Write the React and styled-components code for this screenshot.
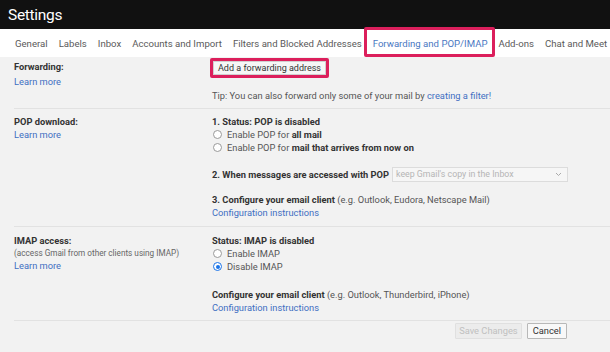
import React from "react";
import styled, { createGlobalStyle } from "styled-components";

const Global = createGlobalStyle`
  html, body { margin: 0; padding: 0; background: #f2f2f2; }
  body { font-family: Roboto, "Liberation Sans", sans-serif; width: 610px; height: 352px; overflow: hidden; }
  * { box-sizing: border-box; }
`;

const PINK = "#dc1f5c";
const LINK = "#3f6fc2";

const Page = styled.div`
  width: 610px;
  height: 352px;
  background: #f2f2f2;
  overflow: hidden;
`;

const Header = styled.header`
  height: 29px;
  background: #111111;
  display: flex;
  align-items: center;
  padding-left: 8px;
`;

const Title = styled.h1`
  margin: 0;
  color: #ffffff;
  font-family: Roboto, "Open Sans", sans-serif;
  font-weight: 400;
  font-size: 15.5px;
  letter-spacing: -0.3px;
`;

const Tabs = styled.nav`
  height: 28px;
  background: #ffffff;
  display: flex;
  align-items: center;
  gap: 11px;
  padding-left: 15px;
  white-space: nowrap;
`;

const Tab = styled.span`
  position: relative;
  font-size: 9.6px;
  color: ${(p) => (p.$active ? "#4a78c2" : "#5a5a5a")};
  &::after {
    content: "";
    display: ${(p) => (p.$active ? "block" : "none")};
    position: absolute;
    left: -9px;
    right: -8px;
    top: -11px;
    bottom: -8px;
    border: 3px solid ${PINK};
    border-radius: 2px;
  }
`;

const Section = styled.section`
  display: grid;
  grid-template-columns: 198px 1fr;
  padding: ${(p) => p.$pad || "3px 0 5px 0"};
  margin-left: 14px;
  border-bottom: 1px solid #e2e2e2;
  font-size: 9.3px;
  line-height: 13px;
  color: #555;
`;

const LabelCol = styled.div`
  display: flex;
  flex-direction: column;
`;

const Label = styled.div`
  font-weight: 700;
  color: #333;
`;

const Sub = styled.div`
  font-size: 8.2px;
  color: #666;
  line-height: 12px;
`;

const Link = styled.a`
  color: ${LINK};
  text-decoration: none;
  margin-top: ${(p) => p.$mt || "0"};
  display: ${(p) => (p.$inline ? "inline" : "block")};
`;

const ValueCol = styled.div`
  display: flex;
  flex-direction: column;
`;

const Line = styled.div`
  margin-top: ${(p) => p.$mt || "0"};
  white-space: nowrap;
`;

const Strong = styled.b`
  color: #333;
  font-weight: 700;
`;

const Highlight = styled.div`
  align-self: flex-start;
  margin: -2px 0 0 -2px;
  border: 3px solid ${PINK};
  border-radius: 2px;
`;

const ForwardButton = styled.button`
  font-family: inherit;
  font-size: 9px;
  color: #333;
  background: #f6f6f6;
  border: 1px solid #d0d0d0;
  height: 14px;
  padding: 0 4px;
  line-height: 12px;
  display: block;
`;

const Radio = styled.span`
  display: inline-block;
  width: 9px;
  height: 9px;
  border-radius: 50%;
  border: 1px solid ${(p) => (p.$checked ? "#1a73e8" : "#9a9a9a")};
  background: #fff;
  margin: 0 5px 0 1px;
  vertical-align: -1px;
  position: relative;
  &::after {
    content: "";
    display: ${(p) => (p.$checked ? "block" : "none")};
    position: absolute;
    left: 1.5px;
    top: 1.5px;
    width: 4px;
    height: 4px;
    border-radius: 50%;
    background: #1a73e8;
  }
`;

const SelectRow = styled.div`
  display: flex;
  align-items: center;
  gap: 3px;
  margin-top: 13px;
  height: 15px;
  white-space: nowrap;
`;

const Select = styled.div`
  width: 176px;
  height: 15px;
  border: 1px solid #dcdcdc;
  background: #f6f6f6;
  color: #b5b5b5;
  font-size: 8.8px;
  display: flex;
  align-items: center;
  justify-content: space-between;
  padding: 0 5px 0 3px;
`;

const Footer = styled.div`
  display: flex;
  justify-content: flex-end;
  gap: 5px;
  padding: 2px 43px 0 0;
`;

const Btn = styled.button`
  font-family: inherit;
  font-size: 9.3px;
  height: 16px;
  padding: 0 ${(p) => (p.$disabled ? "3px" : "5px")};
  background: ${(p) => (p.$disabled ? "#ececec" : "#f8f8f8")};
  color: ${(p) => (p.$disabled ? "#c0c0c0" : "#333")};
  border: 1px solid ${(p) => (p.$disabled ? "#e0e0e0" : "#b8b8b8")};
  border-radius: 1px;
  line-height: 14px;
`;

const Chevron = () => (
  <svg width="7" height="5" viewBox="0 0 7 5">
    <path d="M1 1 L3.5 3.5 L6 1" stroke="#aaa" strokeWidth="1" fill="none" />
  </svg>
);

const tabs = [
  "General",
  "Labels",
  "Inbox",
  "Accounts and Import",
  "Filters and Blocked Addresses",
  "Forwarding and POP/IMAP",
  "Add-ons",
  "Chat and Meet",
];

export default function App() {
  return (
    <Page>
      <Global />
      <Header>
        <Title>Settings</Title>
      </Header>
      <Tabs>
        {tabs.map((t) => (
          <Tab key={t} $active={t === "Forwarding and POP/IMAP"}>
            {t}
          </Tab>
        ))}
      </Tabs>

      <Section $pad="3px 0 6px 0">
        <LabelCol>
          <Label>Forwarding:</Label>
          <Link $mt="2px">Learn more</Link>
        </LabelCol>
        <ValueCol>
          <Highlight>
            <ForwardButton>Add a forwarding address</ForwardButton>
          </Highlight>
          <Line $mt="11px">
            Tip: You can also forward only some of your mail by{" "}
            <Link $inline>creating a filter!</Link>
          </Line>
        </ValueCol>
      </Section>

      <Section $pad="6px 0 7px 0">
        <LabelCol>
          <Label>POP download:</Label>
          <Link>Learn more</Link>
        </LabelCol>
        <ValueCol>
          <Line>
            <Strong>1. Status: POP is disabled</Strong>
          </Line>
          <Line>
            <Radio />
            Enable POP for <Strong>all mail</Strong>
          </Line>
          <Line>
            <Radio />
            Enable POP for <Strong>mail that arrives from now on</Strong>
          </Line>
          <SelectRow>
            <Strong>2. When messages are accessed with POP</Strong>
            <Select>
              <span>keep Gmail's copy in the Inbox</span>
              <Chevron />
            </Select>
          </SelectRow>
          <Line $mt="11px">
            <Strong>3. Configure your email client</Strong> (e.g. Outlook, Eudora,
            Netscape Mail)
          </Line>
          <Link>Configuration instructions</Link>
        </ValueCol>
      </Section>

      <Section $pad="7px 0 6px 0">
        <LabelCol>
          <Label>IMAP access:</Label>
          <Sub>(access Gmail from other clients using IMAP)</Sub>
          <Link>Learn more</Link>
        </LabelCol>
        <ValueCol>
          <Line>
            <Strong>Status: IMAP is disabled</Strong>
          </Line>
          <Line>
            <Radio />
            Enable IMAP
          </Line>
          <Line>
            <Radio $checked />
            Disable IMAP
          </Line>
          <Line $mt="15px">
            <Strong>Configure your email client</Strong> (e.g. Outlook,
            Thunderbird, iPhone)
          </Line>
          <Link>Configuration instructions</Link>
        </ValueCol>
      </Section>

      <Footer>
        <Btn $disabled>Save Changes</Btn>
        <Btn>Cancel</Btn>
      </Footer>
    </Page>
  );
}
